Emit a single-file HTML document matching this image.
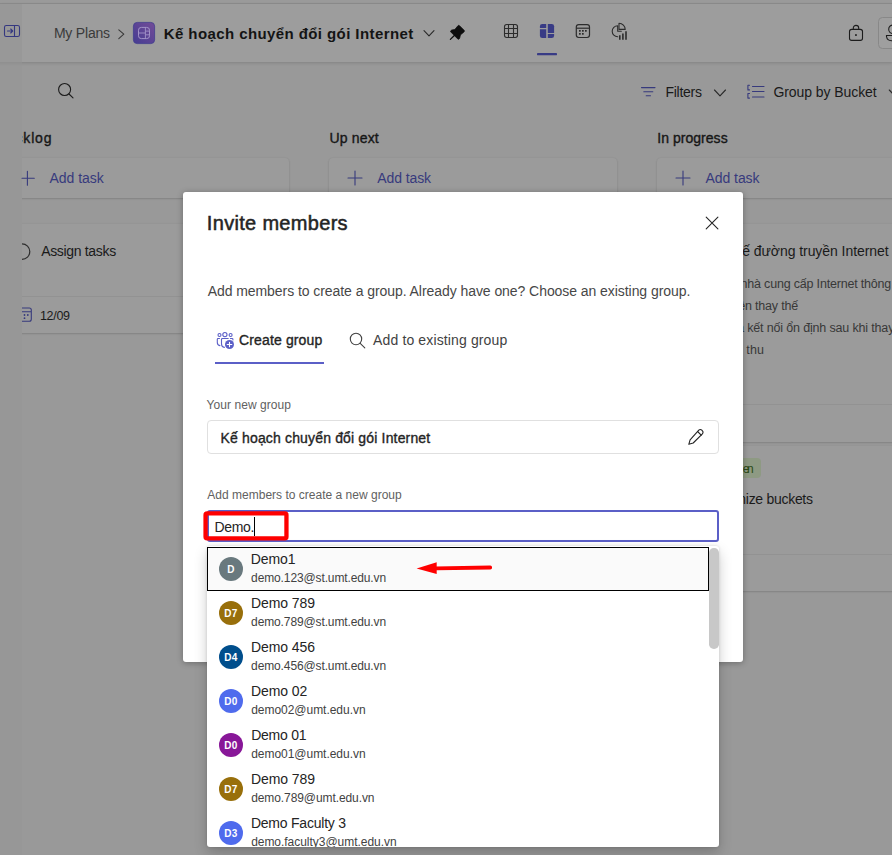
<!DOCTYPE html>
<html lang="vi">
<head>
<meta charset="utf-8">
<title>Invite members</title>
<style>
html,body{margin:0;padding:0;}
body{width:892px;height:855px;overflow:hidden;position:relative;background:#999999;font-family:"Liberation Sans",sans-serif;color:#242424;}
.a{position:absolute;}
.t{position:absolute;white-space:nowrap;line-height:1;}
.clip{position:absolute;overflow:hidden;}
svg{position:absolute;left:0;top:0;overflow:visible;}
#topband{left:0;top:0;width:892px;height:3px;background:#9a9a9a;}
#topline{left:0;top:3px;width:892px;height:1px;background:#8d8d8d;}
#header{left:0;top:4px;width:892px;height:58px;background:#9d9d9d;box-shadow:0 1px 3px rgba(0,0,0,.16);}
#lstrip{left:0;top:62px;width:22px;height:793px;background:linear-gradient(#8f8f8f,#979797 4px);}
.card{background:#9b9b9b;border-radius:4px;box-shadow:0 1px 2px rgba(0,0,0,.13),0 0 2px rgba(0,0,0,.08);}
.sep{position:absolute;height:1px;background:#929292;}
.pur{color:#373a7d;}
.b{font-weight:normal;-webkit-text-stroke:0.35px currentColor;}
#modal{left:183px;top:192px;width:560px;height:469.5px;background:#fff;border-radius:3px;box-shadow:0 1px 6px rgba(0,0,0,.3);}
#dd{left:207px;top:546px;width:512px;height:300.5px;background:#fff;border-radius:3px;box-shadow:0 6px 14px rgba(0,0,0,.20),0 0 3px rgba(0,0,0,.14);}
.av{position:absolute;left:218.8px;width:24px;height:24px;border-radius:50%;color:#fff;font-size:10px;font-weight:bold;text-align:center;line-height:26px;letter-spacing:0.3px;text-indent:0.3px;}
.nm{font-size:14px;color:#242424;left:251px;}
.em{font-size:12px;color:#424242;left:251px;}
</style>
</head>
<body>
<div class="a" id="topband"></div>
<div class="a" id="topline"></div>
<div class="a" id="header"></div>
<div class="a" style="left:0;top:4px;width:22px;height:58px;background:#989898;"></div>

<!-- add task cards -->
<div class="a card" style="left:0;top:158px;width:289px;height:39.5px;"></div>
<div class="a card" style="left:329px;top:158px;width:288px;height:39.5px;"></div>
<div class="a card" style="left:657px;top:158px;width:260px;height:39.5px;"></div>
<!-- col1 task card -->
<div class="a card" style="left:0;top:224px;width:289px;height:109px;"></div>
<div class="sep" style="left:0;top:296px;width:289px;"></div>
<!-- col3 cards -->
<div class="a card" style="left:657px;top:224px;width:260px;height:217.5px;"></div>
<div class="sep" style="left:657px;top:404px;width:260px;"></div>
<div class="a card" style="left:657px;top:446px;width:260px;height:145px;"></div>
<div class="sep" style="left:657px;top:554px;width:260px;"></div>
<div class="a" style="left:700px;top:458px;width:61px;height:19.5px;background:#8e9a83;border-radius:4px;"></div>


<div class="a" id="lstrip"></div>
<!-- header text -->
<span class="t" id="t1" style="left:53.89px;top:26.05px;font-size:14px;color:#3a3a3a;letter-spacing:-0.2px;">My Plans</span>
<span class="t" id="t2" style="left:163.81px;top:26.2px;font-size:15px;font-weight:bold;color:#141414;letter-spacing:0.41px;">Kế hoạch chuyển đổi gói Internet</span>
<!-- toolbar text -->
<span class="t" id="t3" style="left:665.38px;top:85.15px;font-size:14px;color:#1a1a1a;letter-spacing:-0.24px;">Filters</span>
<span class="t" id="t4" style="left:773.48px;top:85.15px;font-size:14px;color:#1a1a1a;letter-spacing:-0.077px;">Group by Bucket</span>
<!-- column headers -->
<div class="clip" style="left:22px;top:125px;width:100px;height:26px;"><span class="t b" id="t5" style="left:-6.49px;top:6.15px;font-size:14px;color:#161616;letter-spacing:0.81px;">cklog</span></div>
<span class="t b" id="t6" style="left:329.57px;top:131.15px;font-size:14px;color:#161616;letter-spacing:0.15px;">Up next</span>
<span class="t b" id="t7" style="left:657.23px;top:131.15px;font-size:14px;color:#161616;letter-spacing:0.04px;">In progress</span>
<span class="t pur" id="t8" style="left:49.57px;top:170.95px;font-size:14px;letter-spacing:-0.054px;">Add task</span>
<span class="t pur" id="t9" style="left:377.36px;top:170.95px;font-size:14px;letter-spacing:-0.104px;">Add task</span>
<span class="t pur" id="t10" style="left:705.53px;top:170.95px;font-size:14px;letter-spacing:-0.064px;">Add task</span>
<span class="t" id="t11" style="left:41.14px;top:244.25px;font-size:14px;color:#1a1a1a;letter-spacing:-0.325px;">Assign tasks</span>
<span class="t" id="t12" style="left:39.88px;top:310.42px;font-size:12.5px;color:#1a1a1a;letter-spacing:-0.29px;">12/09</span>

<!-- col3 text (clipped behind modal) -->
<div class="clip" style="left:743px;top:236px;width:149px;height:30px;"><span class="t" id="t13" style="top:7.75px;font-size:14px;color:#1a1a1a;left:-0.81px;letter-spacing:-0.06px;">ế đường truyền Internet</span></div>
<div class="clip" style="left:743px;top:272px;width:149px;height:90px;">
<span class="t" id="t14" style="left:-2.47px;top:6.42px;font-size:12.5px;color:#383838;letter-spacing:-0.19px;">nhà cung cấp Internet thông tin</span>
<span class="t" id="t15" style="left:-4.76px;top:27.52px;font-size:12.5px;color:#383838;letter-spacing:-0.19px;">ên thay thế</span>
<span class="t" id="t16" style="left:-5.89px;top:50.42px;font-size:12.5px;color:#383838;letter-spacing:-0.16px;">a kết nối ổn định sau khi thay đổi</span>
<span class="t" id="t17" style="left:-7.48px;top:71.92px;font-size:12.5px;color:#383838;letter-spacing:0.16px;">n thu</span>
</div>
<div class="clip" style="left:743px;top:455px;width:149px;height:60px;">
<span class="t" id="t18" style="left:-0.18px;top:8.34px;font-size:12px;color:#2c4a17;letter-spacing:-2.44px;">en</span>
<span class="t" id="t19" style="left:-4.67px;top:36.75px;font-size:14px;color:#1a1a1a;letter-spacing:-0.29px;">nize buckets</span>
</div>

<!-- background icons -->
<svg width="892" height="855" viewBox="0 0 892 855" fill="none">
<!-- panel toggle -->
<g stroke="#353880" stroke-width="1.1" stroke-linecap="round" stroke-linejoin="round">
<rect x="4.5" y="25.5" width="15" height="11" rx="1.8"/>
<path d="M14.5 25.5V36.5M7.5 31H12.5M10.7 29L12.7 31L10.7 33"/>
</g>
<!-- breadcrumb chevron -->
<path d="M118.8 29.8L123.8 34.2L118.8 38.6" stroke="#3a3a3a" stroke-width="1.1" stroke-linecap="round" stroke-linejoin="round"/>
<!-- plan icon -->
<defs><linearGradient id="pg" x1="1" y1="0" x2="0" y2="1"><stop offset="0" stop-color="#734c98"/><stop offset="1" stop-color="#453c92"/></linearGradient></defs>
<rect x="133.4" y="22.4" width="21.2" height="21.2" rx="3.8" fill="url(#pg)" stroke="#413e8e" stroke-width=".8"/>
<g stroke="#a393c8" stroke-width="1" stroke-linejoin="round">
<rect x="138.5" y="27.4" width="11" height="11.2" rx="2.8"/>
<path d="M145.4 27.4V38.6M138.5 33H145.4M145.4 31.1H149.5M145.4 34.8H149.5" stroke-width=".9"/>
</g>
<!-- title chevron -->
<path d="M424 30.6L429 35.8L434 30.6" stroke="#2a2a2a" stroke-width="1.1" stroke-linecap="round" stroke-linejoin="round"/>
<!-- pin -->
<g transform="translate(455.3 34.5) rotate(45)" fill="#0e0e0e"><path stroke="#0e0e0e" stroke-width=".7" stroke-linejoin="round" d="M-3.2-9.2H3.2Q4.4-9.2 4.3-8L3.9-3.3L5.7-.500Q6.3 1.4 4.9 1.4H-4.9Q-6.3 1.4-5.7-.500L-3.9-3.3L-4.3-8Q-4.4-9.2-3.2-9.2Z"/><path d="M0 1V7" stroke="#0e0e0e" stroke-width="1.2" stroke-linecap="round"/></g>
<!-- grid icon -->
<g stroke="#2c2c2c" stroke-width="1.1">
<rect x="504.5" y="24.5" width="13" height="13" rx="2.2"/>
<path d="M508.5 24.5V37.5M513.5 24.5V37.5M504.5 28.5H517.5M504.5 33.5H517.5"/>
</g>
<!-- board icon (selected) -->
<g fill="#383b85">
<path d="M542.3 23.9h3.9v4h-6.3v-1.6a2.4 2.4 0 0 1 2.4-2.4z"/>
<path d="M539.9 29.2h6.3v8.9h-3.9a2.4 2.4 0 0 1-2.4-2.4z"/>
<path d="M547.8 23.9h3.9a2.4 2.4 0 0 1 2.4 2.4v6.6h-6.3z"/>
<path d="M547.8 34.1h6.3v1.6a2.4 2.4 0 0 1-2.4 2.4h-3.9z"/>
</g>
<rect x="537" y="53" width="20" height="2.2" rx=".4" fill="#383b85"/>
<!-- calendar icon -->
<g stroke="#2c2c2c" stroke-width="1.2">
<rect x="576.3" y="24.6" width="13.2" height="12.9" rx="2.4"/>
<path d="M576.3 28.2H589.5"/>
</g>
<g fill="#2c2c2c"><rect x="579" y="30" width="1.7" height="1.7"/><rect x="582" y="30" width="1.7" height="1.7"/><rect x="585" y="30" width="1.7" height="1.7"/><rect x="579" y="33" width="1.7" height="1.7"/><rect x="582" y="33" width="1.7" height="1.7"/></g>
<!-- chart icon -->
<g stroke="#2c2c2c" stroke-width="1.1" stroke-linecap="round" stroke-linejoin="round">
<path d="M617.7 25.8a5.5 5.5 0 1 0 0 11M617.7 25.8v5.5h3.6"/>
<path d="M619 23.2a6.2 6.2 0 0 1 6.2 6.2h-6.2z"/>
</g>
<g stroke="#2c2c2c" stroke-width="1.6" stroke-linecap="butt"><path d="M619.8 35.3v4.4M622.9 33.5v6.2M626 31.3v8.4"/></g>
<!-- lock -->
<g stroke="#1c1c1c" stroke-width="1.1">
<rect x="849.5" y="29.4" width="13" height="11" rx="2.2"/>
<path d="M853.3 29.4v-1.3a2.7 2.7 0 0 1 5.4 0v1.3"/>
</g>
<rect x="855.1" y="34.2" width="1.7" height="1.7" fill="#1c1c1c"/>
<!-- share button -->
<rect x="878.5" y="17.5" width="30" height="31" rx="4" fill="#9f9f9f" stroke="#888888"/>
<g stroke="#1c1c1c" stroke-width="1.1"><circle cx="893" cy="29.3" r="4.3"/><path d="M886.5 35.5h13v1a5 5 0 0 1-5 4.2h-3a5 5 0 0 1-5-4.2z"/></g>
<!-- search -->
<g stroke="#1c1c1c" stroke-width="1.1" stroke-linecap="round"><circle cx="64.6" cy="89.5" r="6"/><path d="M69 94l4 3.8"/></g>
<!-- filter icon -->
<g stroke="#373a7d" stroke-width="1.1" stroke-linecap="round"><path d="M641.5 87.6h13.5M643.8 91.7h9M646.2 95.8h4.3"/></g>
<path d="M714.5 90L720 95.8L725.5 90" stroke="#2a2a2a" stroke-width="1.1" stroke-linecap="round" stroke-linejoin="round"/>
<!-- group icon -->
<g stroke="#373a7d" stroke-width="1.1" stroke-linecap="round" stroke-linejoin="round">
<path d="M752.5 86.5h11.5M752.5 91.5h11.5M752.5 97h11.5"/>
<path d="M749.5 85.3h-1.6v4.6h1.6M749.5 93.5h-1.6v4.6h1.6"/>
</g>
<path d="M889.3 90L894.8 95.8" stroke="#2a2a2a" stroke-width="1.1" stroke-linecap="round"/>
<!-- plus icons -->
<g stroke="#373a7d" stroke-width="1.1" stroke-linecap="round">
<path d="M22 178.2H34.3M27.4 171.2V185.2"/>
<path d="M348 178H362M355 171V185"/>
<path d="M676 178H690M683 171V185"/>
</g>
<!-- task circle -->
<path d="M22 243.8a7.8 7.8 0 0 1 0 15.6" stroke="#2e2e2e" stroke-width="1.2"/>
<!-- small calendar -->
<g stroke="#373a7d" stroke-width="1.1"><path d="M22 308h7.3a2 2 0 0 1 2 2v9.3a2 2 0 0 1-2 2H22M22 311.8h9.3"/></g>
<g fill="#373a7d"><circle cx="24.5" cy="315" r=".9"/><circle cx="27.8" cy="315" r=".9"/><circle cx="24.5" cy="318.2" r=".9"/></g>
</svg>

<!-- modal -->
<div class="a" id="modal"></div>
<span class="t b" id="t20" style="-webkit-text-stroke-width:0.5px;left:206.86px;top:213.07px;font-size:20px;color:#242424;letter-spacing:0.31px;">Invite members</span>
<span class="t" id="t21" style="left:207.64px;top:284.35px;font-size:14px;color:#474747;letter-spacing:-0.062px;">Add members to create a group. Already have one? Choose an existing group.</span>
<span class="t b" id="t22" style="left:239.05px;top:333.25px;font-size:14px;color:#242424;letter-spacing:0.135px;">Create group</span>
<div class="a" style="left:215px;top:362px;width:109px;height:2px;background:#5b5fc7;"></div>
<span class="t" id="t23" style="left:373.09px;top:333.25px;font-size:14px;color:#424242;letter-spacing:0.13px;">Add to existing group</span>
<span class="t" id="t24" style="left:206.62px;top:398.84px;font-size:12px;color:#616161;letter-spacing:0.056px;">Your new group</span>
<div class="a" style="left:207px;top:420px;width:510px;height:31.5px;border:1px solid #e0e0e0;border-radius:4px;"></div>
<span class="t b" id="t25" style="left:220.53px;top:431.15px;font-size:14px;color:#242424;letter-spacing:0.16px;">Kế hoạch chuyển đổi gói Internet</span>
<span class="t" id="t26" style="left:207.33px;top:488.84px;font-size:12px;color:#616161;letter-spacing:0.009px;">Add members to create a new group</span>
<div class="a" style="left:207px;top:510px;width:507.5px;height:27.5px;border:2px solid #5b5fc7;border-radius:3px;"></div>
<span class="t" id="t27" style="left:214.52px;top:520.15px;font-size:14px;color:#242424;letter-spacing:-0.34px;">Demo.</span>
<div class="a" style="left:254px;top:517px;width:1px;height:18.5px;background:#000;"></div>

<!-- dropdown -->
<div class="a" id="dd"></div>
<div class="a" style="left:207px;top:547px;width:500px;height:42px;background:#fafafa;border:1px solid #000;"></div>
<div class="a" style="left:709.2px;top:547.5px;width:9.7px;height:101px;background:#c8c8c8;border-radius:4.8px;"></div>

<div class="av" style="top:557.2px;background:#69797e;">D</div>
<span class="t nm" id="n1" style="top:552.05px;left:250.81px;letter-spacing:-0.09px;">Demo1</span>
<span class="t em" id="e1" style="top:571.84px;left:251.08px;letter-spacing:-0.121px;">demo.123@st.umt.edu.vn</span>
<div class="av" style="top:601.2px;background:#986f0b;">D7</div>
<span class="t nm" id="n2" style="top:596.05px;left:251.06px;letter-spacing:-0.1px;">Demo 789</span>
<span class="t em" id="e2" style="top:615.84px;left:251.08px;letter-spacing:-0.121px;">demo.789@st.umt.edu.vn</span>
<div class="av" style="top:645.2px;background:#004e8c;">D4</div>
<span class="t nm" id="n3" style="top:640.05px;left:251.05px;letter-spacing:-0.1px;">Demo 456</span>
<span class="t em" id="e3" style="top:659.84px;left:251.08px;letter-spacing:-0.121px;">demo.456@st.umt.edu.vn</span>
<div class="av" style="top:689.2px;background:#4f6bed;">D0</div>
<span class="t nm" id="n4" style="top:684.05px;left:250.91px;letter-spacing:-0.07px;">Demo 02</span>
<span class="t em" id="e4" style="top:703.84px;left:251.2px;letter-spacing:-0.033px;">demo02@umt.edu.vn</span>
<div class="av" style="top:733.2px;background:#881798;">D0</div>
<span class="t nm" id="n5" style="top:728.05px;left:251.13px;letter-spacing:-0.23px;">Demo 01</span>
<span class="t em" id="e5" style="top:747.84px;left:251.2px;letter-spacing:-0.033px;">demo01@umt.edu.vn</span>
<div class="av" style="top:777.2px;background:#986f0b;">D7</div>
<span class="t nm" id="n6" style="top:772.05px;left:251.06px;letter-spacing:-0.1px;">Demo 789</span>
<span class="t em" id="e6" style="top:791.84px;left:251.18px;letter-spacing:-0.087px;">demo.789@umt.edu.vn</span>
<div class="av" style="top:821.2px;background:#4f6bed;">D3</div>
<span class="t nm" id="n7" style="top:816.05px;left:250.91px;letter-spacing:-0.22px;">Demo Faculty 3</span>
<div class="clip" style="left:207px;top:826px;width:512px;height:20.5px;"><span class="t em" id="e7" style="left:44.13px;top:9.84px;letter-spacing:-0.034px;">demo.faculty3@umt.edu.vn</span></div>

<!-- modal icons -->
<svg width="892" height="855" viewBox="0 0 892 855" fill="none">
<!-- close -->
<path d="M706.2 217.2L717.9 228.9M717.9 217.2L706.2 228.9" stroke="#242424" stroke-width="1.1" stroke-linecap="round"/>
<!-- people team add -->
<g stroke="#5b5fc7" stroke-width="1.1" stroke-linecap="round" stroke-linejoin="round">
<circle cx="219.5" cy="335" r="1.5"/><circle cx="224.9" cy="334.6" r="2.1"/><circle cx="230.6" cy="335" r="1.5"/>
<path d="M219.5 338.5h-1.4a.8.8 0 0 0-.8.8v3.2a3.2 3.2 0 0 0 2.6 3.1"/>
<path d="M228.2 338.5h-5.8a.9.9 0 0 0-.9.9v4.5a3.6 3.6 0 0 0 2.9 3.5"/>
<path d="M230.4 338.5h1.7a.8.8 0 0 1 .8.8v.6"/>
</g>
<circle cx="229.5" cy="344.5" r="4.5" fill="#5b5fc7"/>
<path d="M227.2 344.5h4.6M229.5 342.2v4.6" stroke="#fff" stroke-width="1.1" stroke-linecap="round"/>
<!-- search in tab -->
<g stroke="#424242" stroke-width="1.1" stroke-linecap="round"><circle cx="356" cy="339" r="5.7"/><path d="M360.2 343.3l4.6 4.5"/></g>
<!-- pencil -->
<g stroke="#242424" stroke-width="1.1" stroke-linejoin="round" stroke-linecap="round">
<path d="M698.8 430.2a2.1 2.1 0 0 1 3 0l.6.6a2.1 2.1 0 0 1 0 3l-9.2 9.2-4.4 1.3 1.3-4.4z"/>
<path d="M697.6 431.5l3.6 3.6"/>
</g>
<!-- red box -->
<rect x="205.55" y="513.45" width="80.9" height="25" rx="1.6" stroke="#fe0000" stroke-width="4.3"/>
<!-- red arrow -->
<path d="M416.6 568.5L436.7 562.3L436.7 574Z" fill="#ff0000"/>
<path d="M436 568.35L490.2 567.5" stroke="#ff0000" stroke-width="3.8" stroke-linecap="round"/>
</svg>
</body>
</html>
